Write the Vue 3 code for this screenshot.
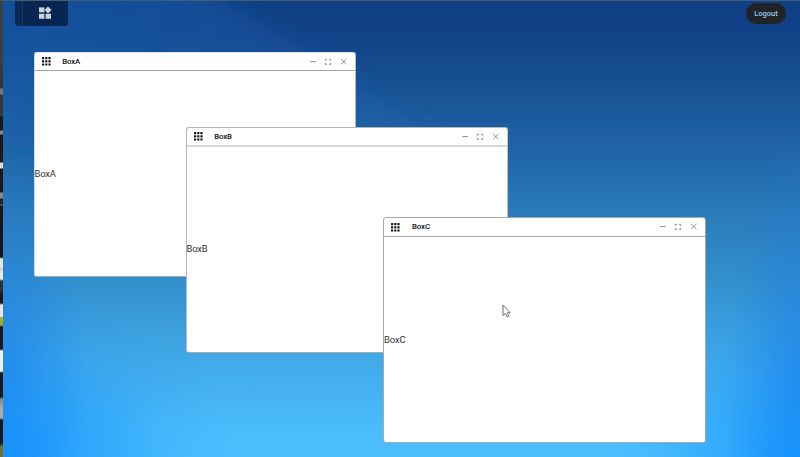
<script setup>
const windows = [
  { name: 'BoxA', x: 34, y: 52 },
  { name: 'BoxB', x: 186, y: 127, kind: 'soft' },
  { name: 'BoxC', x: 383, y: 217, kind: 'front' },
]
const dots = [0, 3.2, 6.4]
</script>

<template>
  <div class="screen">
    <div class="edge"></div>
    <main class="desktop">
      <svg class="beams" viewBox="0 0 797 456">
        <defs>
          <linearGradient id="beam" x1="0" y1="0" x2="500" y2="190" gradientUnits="userSpaceOnUse">
            <stop offset="0" stop-color="#1b62b4" stop-opacity="0.5" />
            <stop offset="0.5" stop-color="#1b62b0" stop-opacity="0.33" />
            <stop offset="1" stop-color="#2a79bd" stop-opacity="0" />
          </linearGradient>
          <filter id="soften" x="-20%" y="-20%" width="140%" height="140%">
            <feGaussianBlur stdDeviation="11" />
          </filter>
        </defs>
        <path d="M-30 -30H170L280 35L400 114L520 190L300 240L-30 130Z" fill="url(#beam)" filter="url(#soften)" />
      </svg>

      <header class="topbar">
        <nav class="dock">
          <svg class="widgets" viewBox="0 0 13 12" fill="#ccd3dc">
            <rect x="0" y="0.4" width="5.4" height="5" />
            <path d="M9 -0.6 L12.6 2.9 L9 6.4 L5.6 2.9 Z" />
            <rect x="0" y="6.8" width="5.4" height="5" />
            <rect x="6.6" y="6.8" width="5.4" height="5" />
          </svg>
        </nav>
        <button class="logout">Logout</button>
      </header>

      <section
        v-for="w in windows"
        :key="w.name"
        class="window"
        :class="w.kind"
        :style="{ left: w.x + 'px', top: w.y + 'px' }"
      >
        <div class="titlebar">
          <svg class="grid" viewBox="0 0 9 9" fill="#111">
            <template v-for="r in dots" :key="r">
              <rect v-for="c in dots" :key="c" :x="c" :y="r" width="2.2" height="2.2" rx="0.4" />
            </template>
          </svg>
          <span class="title">{{ w.name }}</span>
          <div class="controls">
            <svg viewBox="0 0 8 8"><path d="M1.2 3.6H6.8" /></svg>
            <svg viewBox="0 0 8 8">
              <path d="M1.3 2.8V1.3H3M5 1.3H6.7V2.8M6.7 4.8V6.3H5M3 6.3H1.3V4.8" />
            </svg>
            <svg viewBox="0 0 8 8"><path d="M1.2 1L6.4 6.2M6.4 1L1.2 6.2" /></svg>
          </div>
        </div>
        <div class="content">{{ w.name }}</div>
      </section>

      <svg class="cursor" viewBox="0 0 9 14">
        <path
          d="M1 1V11.6L3.4 9.5L5 12.9L6.9 12L5.4 8.8H8.2Z"
          fill="#fff"
          stroke="#5b5f66"
          stroke-width="0.9"
        />
      </svg>
    </main>
  </div>
</template>

<style>
body {
  margin: 0;
  overflow: hidden;
}
</style>

<style scoped>
.screen {
  position: relative;
  display: flex;
  box-sizing: border-box;
  width: 800px;
  height: 457px;
  border-top: 1px solid #455d73;
  font-family: Roboto, "Liberation Sans", sans-serif;
  overflow: hidden;
}
.edge {
  flex: none;
  width: 3px;
  background: linear-gradient(
    #3a3f45 0 60px, #30343a 80px, #30343a 87px, #777 88px 93px, #34373b 94px 115px,
    #17191b 116px 129px, #888 130px 133px, #17191b 134px 161px, #ddd 162px 167px,
    #17191b 168px 191px, #888 192px 197px, #222 198px 203px, #666 204px, #151618 205px 256px,
    #e4e4e4 258px 267px, #bbb 268px, #e8e8e8 270px 278px, #303236 280px 290px,
    #17191b 291px 302px, #e8e8e8 304px 315px, #a8a820 317px 324px, #17191b 326px 348px,
    #eee 350px 370px, #17191b 372px 396px, #888 398px, #b0aca4 408px 417px,
    #17191b 419px 442px, #77702c 446px 456px
  );
}
.desktop {
  flex: 1;
  background:
    radial-gradient(ellipse 230px 180px at 0% 100%, rgba(18, 144, 255, 0.85), rgba(24, 146, 252, 0.55) 35%, rgba(28, 146, 250, 0.16) 70%, transparent),
    radial-gradient(ellipse 190px 180px at 100% 100%, rgba(18, 144, 255, 0.85), rgba(24, 146, 252, 0.5) 35%, rgba(28, 146, 250, 0.16) 70%, transparent),
    radial-gradient(ellipse 85px 250px at 0% 85%, rgba(24, 120, 226, 0.7), rgba(24, 120, 226, 0.26) 55%, transparent),
    radial-gradient(ellipse 75px 250px at 100% 85%, rgba(24, 120, 226, 0.7), rgba(24, 120, 226, 0.26) 55%, transparent),
    linear-gradient(#0f3f84 0, #124389 40px, #195496 95px, #2067a8 155px, #2b7ab8 210px, #3390cd 280px, #40a7e4 350px, #4abdfc 430px, #4abffe);
}
.beams {
  position: absolute;
  left: 3px;
  top: 0;
  width: 797px;
  height: 456px;
}
.topbar {
  position: relative;
  display: flex;
  justify-content: space-between;
  align-items: flex-start;
  padding: 0 14px 0 12px;
}
.dock {
  display: flex;
  box-sizing: border-box;
  width: 53px;
  height: 25px;
  padding: 6px 0 0 24px;
  border-radius: 0 0 3px 3px;
  background: linear-gradient(90deg, #092a56 0 7px, #183c66 7px 8px, #082651 8px);
}
.widgets {
  width: 13px;
  height: 12px;
  overflow: visible;
}
.logout {
  width: 40px;
  height: 21px;
  margin-top: 2px;
  padding: 0;
  border: 0;
  border-radius: 10.5px;
  background: #202328;
  color: #9ccbf2;
  font: 500 7.5px/21px Roboto, sans-serif;
  text-align: center;
}
.window {
  position: absolute;
  display: flex;
  flex-direction: column;
  box-sizing: border-box;
  width: 322px;
  height: 225px;
  margin-top: -1px;
  border: 1px solid;
  border-color: #dfe4ea #b4b8bc #a5a9ad #d0d7de;
  border-radius: 3px;
  background: #fff;
}
.soft {
  height: 226px;
  border-color: #b4b8bc #c0c4c8 #a5a9ad #b4b8bc;
}
.front {
  width: 323px;
  height: 226px;
  border-color: #a5a9ad;
}
.titlebar {
  display: flex;
  align-items: center;
  box-sizing: border-box;
  height: 18px;
  padding: 0 7px;
  border-bottom: 1px solid #a6a6a6;
}
.soft .titlebar {
  height: 19px;
  border-bottom: 2px solid #d6d6d6;
}
.front .titlebar {
  height: 19px;
}
.grid {
  width: 9px;
  height: 9px;
}
.title {
  margin-left: 11.2px;
  color: #111;
  font-size: 7.8px;
  font-weight: 500;
  letter-spacing: -0.1px;
  line-height: 10px;
}
.front .title {
  margin-left: 12px;
}
.controls {
  display: flex;
  gap: 7.6px;
  margin-left: auto;
}
.controls svg {
  width: 8px;
  height: 8px;
  fill: none;
  stroke: #808080;
  stroke-width: 0.9;
}
.content {
  display: flex;
  flex: 1;
  align-items: center;
  margin-left: -0.6px;
  color: #333;
  font-size: 9.4px;
  letter-spacing: -0.1px;
}
.soft .content {
  padding-bottom: 2px;
}
.front .content {
  margin-left: 0;
}
.cursor {
  position: absolute;
  left: 502px;
  top: 303px;
  width: 9px;
  height: 14px;
}
</style>
